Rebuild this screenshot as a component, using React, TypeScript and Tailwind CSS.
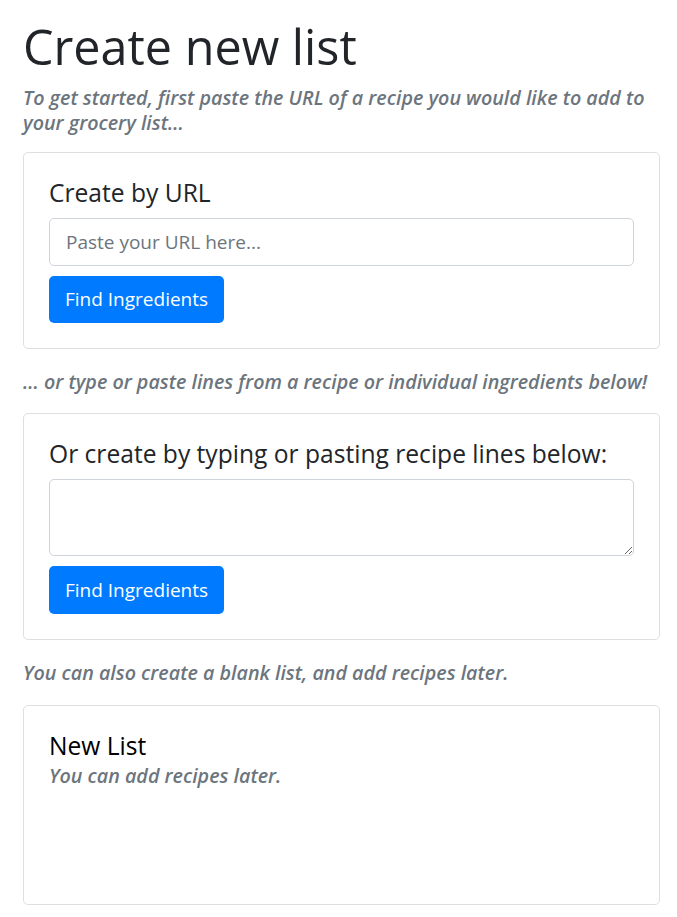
export default function App() {
  return (
    <div className="min-h-screen bg-white pl-[23px] pr-[17px] font-['Open_Sans',sans-serif] text-[19px] text-[#212529]">
      <h1 className="pt-[16px] text-[48.5px] leading-[60px] font-normal mb-[9px]">Create new list</h1>
      <p className="text-[19.7px] leading-[25px] italic font-semibold text-[#6c757d] mb-[17px]">
        To get started, first paste the URL of a recipe you would like to add to your grocery list...
      </p>

      <div className="rounded-[5px] border border-[#dfdfdf] p-[25px]">
        <h5 className="text-[24.6px] leading-[30px] mb-[10px]">Create by URL</h5>
        <input
          type="text"
          placeholder="Paste your URL here..."
          className="block w-full h-[48px] rounded-[5px] border border-[#ced4da] px-[16px] text-[19px] placeholder:text-[#6c757d] outline-none"
        />
        <button className="mt-[10px] h-[47px] rounded-[5px] bg-[#007bff] px-[16px] text-[19px] text-white">
          Find Ingredients
        </button>
      </div>

      <p className="mt-[20px] mb-[19px] text-[19.7px] leading-[25px] italic font-semibold text-[#6c757d]">
        ... or type or paste lines from a recipe or individual ingredients below!
      </p>

      <div className="rounded-[5px] border border-[#dfdfdf] p-[25px]">
        <h5 className="text-[24.6px] leading-[30px] mb-[10px]">Or create by typing or pasting recipe lines below:</h5>
        <textarea className="block w-full h-[77px] rounded-[5px] border border-[#ced4da] px-[16px] py-[8px] text-[19px] outline-none" />
        <button className="mt-[10px] h-[48px] rounded-[5px] bg-[#007bff] px-[16px] text-[19px] text-white">
          Find Ingredients
        </button>
      </div>

      <p className="my-[20px] text-[19.7px] leading-[25px] italic font-semibold text-[#6c757d]">
        You can also create a blank list, and add recipes later.
      </p>

      <div className="h-[200px] rounded-[5px] border border-[#dfdfdf] p-[25px]">
        <h5 className="text-[24.6px] leading-[30px] text-black">New List</h5>
        <p className="text-[19.7px] leading-[30px] italic font-semibold text-[#6c757d]">You can add recipes later.</p>
      </div>
    </div>
  );
}
